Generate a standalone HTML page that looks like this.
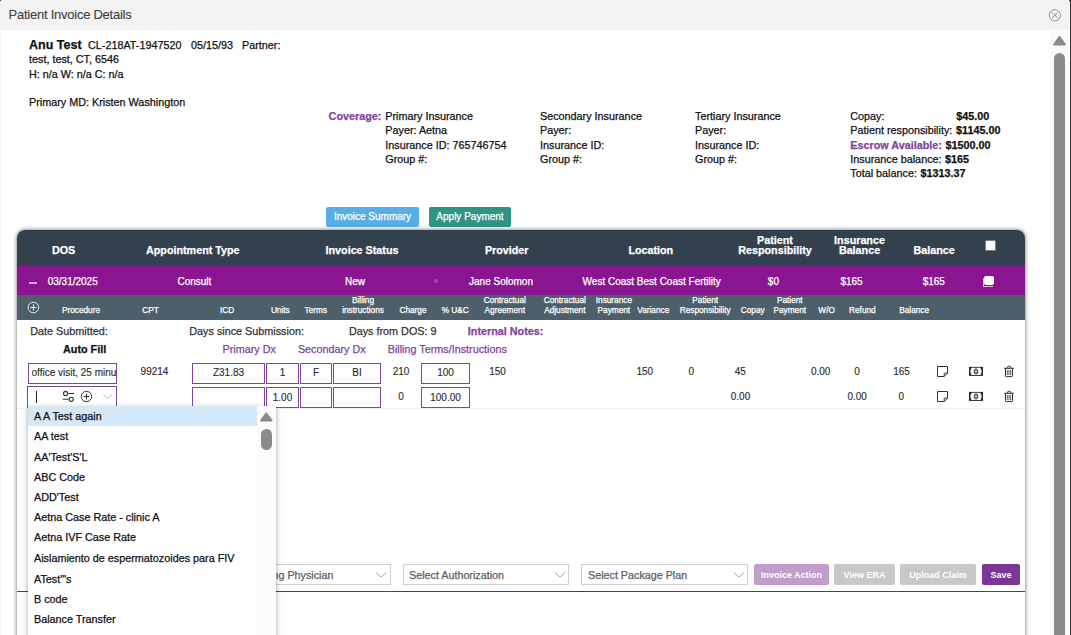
<!DOCTYPE html>
<html><head><meta charset="utf-8"><style>
html,body{margin:0;padding:0;width:1071px;height:635px;overflow:hidden;background:#fff;}
body{position:relative;font-family:"Liberation Sans",sans-serif;}
.t{position:absolute;white-space:nowrap;-webkit-text-stroke:0.25px currentColor;}
.r{position:absolute;}
</style></head><body>
<div class="r" style="left:0px;top:0px;width:1071px;height:635px;background:#333;"></div>
<div class="r" style="left:0px;top:0px;width:1070px;height:635px;background:#fff;border-radius:3px 3px 0 0;"></div>
<div class="r" style="left:0px;top:0px;width:1069px;height:30px;background:#f3f3f3;border-radius:3px 0 0 0;"></div>
<div class="r" style="left:0px;top:30px;width:1px;height:605px;background:#f3f3f3;"></div>
<div class="t" style="left:8.6px;top:8px;font-size:13px;line-height:13px;color:#404040;letter-spacing:-0.25px;-webkit-text-stroke:0.1px currentColor;">Patient Invoice Details</div>
<svg class="r" style="left:1047px;top:8px" width="16" height="16" viewBox="0 0 16 16"><circle cx="7.9" cy="7.3" r="5.6" fill="none" stroke="#777" stroke-width="0.8"/><path d="M4.9 4.3L10.9 10.3M10.9 4.3L4.9 10.3" stroke="#777" stroke-width="0.8"/></svg>
<div class="r" style="left:1050px;top:30px;width:18px;height:605px;background:#fafafa;"></div>
<svg class="r" style="left:1050px;top:30px" width="19" height="20" viewBox="0 0 19 20"><path d="M9.5 6.8 L14.9 14.6 L4.1 14.6 Z" fill="#8a8a8a" stroke="#8a8a8a" stroke-width="1.8" stroke-linejoin="round"/></svg>
<div class="r" style="left:1054px;top:53px;width:11px;height:600px;background:#8a8a8a;border-radius:5.5px;"></div>
<div class="t" style="left:29px;top:39px;font-size:12.5px;line-height:12.5px;color:#111;font-weight:bold;">Anu Test</div>
<div class="t" style="left:88px;top:40px;font-size:10.8px;line-height:10.8px;color:#111;">CL-218AT-1947520</div>
<div class="t" style="left:191px;top:40px;font-size:10.8px;line-height:10.8px;color:#111;">05/15/93</div>
<div class="t" style="left:242px;top:40px;font-size:10.8px;line-height:10.8px;color:#111;">Partner:</div>
<div class="t" style="left:29px;top:54px;font-size:10.8px;line-height:10.8px;color:#111;">test, test, CT, 6546</div>
<div class="t" style="left:29px;top:69px;font-size:10.8px;line-height:10.8px;color:#111;">H: n/a W: n/a C: n/a</div>
<div class="t" style="left:29px;top:97px;font-size:10.8px;line-height:10.8px;color:#111;">Primary MD: Kristen Washington</div>
<div class="t" style="left:328.6px;top:111px;font-size:10.8px;line-height:10.8px;color:#8243a0;font-weight:bold;">Coverage:</div>
<div class="t" style="left:385.3px;top:111px;font-size:10.8px;line-height:10.8px;color:#111;">Primary Insurance</div>
<div class="t" style="left:385.3px;top:125px;font-size:10.8px;line-height:10.8px;color:#111;">Payer: Aetna</div>
<div class="t" style="left:385.3px;top:140px;font-size:10.8px;line-height:10.8px;color:#111;">Insurance ID: 765746754</div>
<div class="t" style="left:385.3px;top:154px;font-size:10.8px;line-height:10.8px;color:#111;">Group #:</div>
<div class="t" style="left:540px;top:111px;font-size:10.8px;line-height:10.8px;color:#111;">Secondary Insurance</div>
<div class="t" style="left:540px;top:125px;font-size:10.8px;line-height:10.8px;color:#111;">Payer:</div>
<div class="t" style="left:540px;top:140px;font-size:10.8px;line-height:10.8px;color:#111;">Insurance ID:</div>
<div class="t" style="left:540px;top:154px;font-size:10.8px;line-height:10.8px;color:#111;">Group #:</div>
<div class="t" style="left:695px;top:111px;font-size:10.8px;line-height:10.8px;color:#111;">Tertiary Insurance</div>
<div class="t" style="left:695px;top:125px;font-size:10.8px;line-height:10.8px;color:#111;">Payer:</div>
<div class="t" style="left:695px;top:140px;font-size:10.8px;line-height:10.8px;color:#111;">Insurance ID:</div>
<div class="t" style="left:695px;top:154px;font-size:10.8px;line-height:10.8px;color:#111;">Group #:</div>
<div class="t" style="left:850.3px;top:111px;font-size:10.8px;line-height:10.8px;color:#111;">Copay:</div>
<div class="t" style="left:956.3px;top:111px;font-size:10.8px;line-height:10.8px;color:#111;font-weight:bold;">$45.00</div>
<div class="t" style="left:850.3px;top:125px;font-size:10.8px;line-height:10.8px;color:#111;">Patient responsibility:</div>
<div class="t" style="left:956px;top:125px;font-size:10.8px;line-height:10.8px;color:#111;font-weight:bold;">$1145.00</div>
<div class="t" style="left:850.3px;top:140px;font-size:10.8px;line-height:10.8px;color:#8243a0;font-weight:bold;">Escrow Available:</div>
<div class="t" style="left:945.6px;top:140px;font-size:10.8px;line-height:10.8px;color:#111;font-weight:bold;">$1500.00</div>
<div class="t" style="left:850.3px;top:154px;font-size:10.8px;line-height:10.8px;color:#111;">Insurance balance:</div>
<div class="t" style="left:945px;top:154px;font-size:10.8px;line-height:10.8px;color:#111;font-weight:bold;">$165</div>
<div class="t" style="left:850.3px;top:168px;font-size:10.8px;line-height:10.8px;color:#111;">Total balance:</div>
<div class="t" style="left:920.6px;top:168px;font-size:10.8px;line-height:10.8px;color:#111;font-weight:bold;">$1313.37</div>
<div class="r" style="left:326px;top:207px;width:93px;height:20px;background:#58aee6;border-radius:2px;"></div>
<div class="t" style="left:252.50px;width:240px;text-align:center;top:212px;font-size:10px;line-height:10px;color:#fff;">Invoice Summary</div>
<div class="r" style="left:429px;top:207px;width:82px;height:20px;background:#2e9585;border-radius:2px;"></div>
<div class="t" style="left:350.00px;width:240px;text-align:center;top:212px;font-size:10px;line-height:10px;color:#fff;">Apply Payment</div>
<div class="r" style="left:17px;top:230px;width:1008px;height:420px;background:#fff;border-radius:8px 8px 0 0;box-shadow:0 0 4px rgba(0,0,0,0.62);"></div>
<div class="r" style="left:17px;top:230px;width:1008px;height:36px;background:#33414e;border-radius:8px 8px 0 0;"></div>
<div class="t" style="left:-56.40px;width:240px;text-align:center;top:245px;font-size:10.75px;line-height:10.75px;color:#fff;font-weight:bold;">DOS</div>
<div class="t" style="left:72.80px;width:240px;text-align:center;top:245px;font-size:10.75px;line-height:10.75px;color:#fff;font-weight:bold;">Appointment Type</div>
<div class="t" style="left:242.00px;width:240px;text-align:center;top:245px;font-size:10.75px;line-height:10.75px;color:#fff;font-weight:bold;">Invoice Status</div>
<div class="t" style="left:386.70px;width:240px;text-align:center;top:245px;font-size:10.75px;line-height:10.75px;color:#fff;font-weight:bold;">Provider</div>
<div class="t" style="left:530.80px;width:240px;text-align:center;top:245px;font-size:10.75px;line-height:10.75px;color:#fff;font-weight:bold;">Location</div>
<div class="t" style="left:655.00px;width:240px;text-align:center;top:235px;font-size:10.75px;line-height:10.75px;color:#fff;font-weight:bold;">Patient</div>
<div class="t" style="left:655.00px;width:240px;text-align:center;top:245px;font-size:10.75px;line-height:10.75px;color:#fff;font-weight:bold;">Responsibility</div>
<div class="t" style="left:739.50px;width:240px;text-align:center;top:235px;font-size:10.75px;line-height:10.75px;color:#fff;font-weight:bold;">Insurance</div>
<div class="t" style="left:739.50px;width:240px;text-align:center;top:245px;font-size:10.75px;line-height:10.75px;color:#fff;font-weight:bold;">Balance</div>
<div class="t" style="left:814.20px;width:240px;text-align:center;top:245px;font-size:10.75px;line-height:10.75px;color:#fff;font-weight:bold;">Balance</div>
<div class="r" style="left:986px;top:241px;width:9px;height:9px;background:#fff;box-shadow:0 0 0 0.6px #aaa;"></div>
<div class="r" style="left:17px;top:266px;width:1008px;height:29px;background:#8a1590;"></div>
<div class="r" style="left:29px;top:282px;width:8px;height:2px;background:#d9a6dd;"></div>
<div class="t" style="left:47.7px;top:277px;font-size:10px;line-height:10px;color:#fff;">03/31/2025</div>
<div class="t" style="left:74.40px;width:240px;text-align:center;top:277px;font-size:10px;line-height:10px;color:#fff;">Consult</div>
<div class="t" style="left:235.00px;width:240px;text-align:center;top:277px;font-size:10px;line-height:10px;color:#fff;">New</div>
<div class="r" style="left:433.5px;top:279px;width:4px;height:4px;border-radius:50%;background:#a04aa6;"></div>
<div class="t" style="left:381.00px;width:240px;text-align:center;top:277px;font-size:10px;line-height:10px;color:#fff;">Jane Solomon</div>
<div class="t" style="left:531.70px;width:240px;text-align:center;top:277px;font-size:10px;line-height:10px;color:#fff;">West Coast Best Coast Fertility</div>
<div class="t" style="left:653.40px;width:240px;text-align:center;top:277px;font-size:10px;line-height:10px;color:#fff;">$0</div>
<div class="t" style="left:731.50px;width:240px;text-align:center;top:277px;font-size:10px;line-height:10px;color:#fff;">$165</div>
<div class="t" style="left:813.80px;width:240px;text-align:center;top:277px;font-size:10px;line-height:10px;color:#fff;">$165</div>
<div class="r" style="left:984px;top:276px;width:9.5px;height:9px;background:#fff;border-radius:2px;"></div>
<div class="r" style="left:983px;top:286.3px;width:9.5px;height:1.2px;background:#e0c4e3;"></div>
<div class="r" style="left:983px;top:278px;width:1px;height:8.5px;background:#d8b8dc;"></div>
<div class="r" style="left:17px;top:295px;width:1008px;height:25px;background:#4c5f6a;"></div>
<svg class="r" style="left:27px;top:301px" width="13" height="13" viewBox="0 0 13 13"><circle cx="6.4" cy="6.5" r="5.3" fill="none" stroke="#fff" stroke-width="0.9"/><path d="M6.4 3.4V9.6M3.3 6.5H9.5" stroke="#fff" stroke-width="0.9"/></svg>
<div class="t" style="left:31.00px;width:100px;text-align:center;top:307px;font-size:8.25px;line-height:8.25px;color:#fff;">Procedure</div>
<div class="t" style="left:100.60px;width:100px;text-align:center;top:307px;font-size:8.25px;line-height:8.25px;color:#fff;">CPT</div>
<div class="t" style="left:177.20px;width:100px;text-align:center;top:307px;font-size:8.25px;line-height:8.25px;color:#fff;">ICD</div>
<div class="t" style="left:230.30px;width:100px;text-align:center;top:307px;font-size:8.25px;line-height:8.25px;color:#fff;">Units</div>
<div class="t" style="left:265.80px;width:100px;text-align:center;top:307px;font-size:8.25px;line-height:8.25px;color:#fff;">Terms</div>
<div class="t" style="left:313.00px;width:100px;text-align:center;top:297px;font-size:8.25px;line-height:8.25px;color:#fff;">Billing</div>
<div class="t" style="left:313.00px;width:100px;text-align:center;top:307px;font-size:8.25px;line-height:8.25px;color:#fff;">instructions</div>
<div class="t" style="left:363.00px;width:100px;text-align:center;top:307px;font-size:8.25px;line-height:8.25px;color:#fff;">Charge</div>
<div class="t" style="left:405.20px;width:100px;text-align:center;top:307px;font-size:8.25px;line-height:8.25px;color:#fff;">% U&amp;C</div>
<div class="t" style="left:454.80px;width:100px;text-align:center;top:297px;font-size:8.25px;line-height:8.25px;color:#fff;">Contractual</div>
<div class="t" style="left:454.80px;width:100px;text-align:center;top:307px;font-size:8.25px;line-height:8.25px;color:#fff;">Agreement</div>
<div class="t" style="left:514.80px;width:100px;text-align:center;top:297px;font-size:8.25px;line-height:8.25px;color:#fff;">Contractual</div>
<div class="t" style="left:514.80px;width:100px;text-align:center;top:307px;font-size:8.25px;line-height:8.25px;color:#fff;">Adjustment</div>
<div class="t" style="left:563.90px;width:100px;text-align:center;top:297px;font-size:8.25px;line-height:8.25px;color:#fff;">Insurance</div>
<div class="t" style="left:563.90px;width:100px;text-align:center;top:307px;font-size:8.25px;line-height:8.25px;color:#fff;">Payment</div>
<div class="t" style="left:603.30px;width:100px;text-align:center;top:307px;font-size:8.25px;line-height:8.25px;color:#fff;">Variance</div>
<div class="t" style="left:655.20px;width:100px;text-align:center;top:297px;font-size:8.25px;line-height:8.25px;color:#fff;">Patient</div>
<div class="t" style="left:655.20px;width:100px;text-align:center;top:307px;font-size:8.25px;line-height:8.25px;color:#fff;">Responsibility</div>
<div class="t" style="left:702.70px;width:100px;text-align:center;top:307px;font-size:8.25px;line-height:8.25px;color:#fff;">Copay</div>
<div class="t" style="left:739.80px;width:100px;text-align:center;top:297px;font-size:8.25px;line-height:8.25px;color:#fff;">Patient</div>
<div class="t" style="left:739.80px;width:100px;text-align:center;top:307px;font-size:8.25px;line-height:8.25px;color:#fff;">Payment</div>
<div class="t" style="left:776.60px;width:100px;text-align:center;top:307px;font-size:8.25px;line-height:8.25px;color:#fff;">W/O</div>
<div class="t" style="left:812.40px;width:100px;text-align:center;top:307px;font-size:8.25px;line-height:8.25px;color:#fff;">Refund</div>
<div class="t" style="left:864.20px;width:100px;text-align:center;top:307px;font-size:8.25px;line-height:8.25px;color:#fff;">Balance</div>
<div class="t" style="left:30.3px;top:326px;font-size:10.8px;line-height:10.8px;color:#333;">Date Submitted:</div>
<div class="t" style="left:189.3px;top:326px;font-size:10.8px;line-height:10.8px;color:#333;">Days since Submission:</div>
<div class="t" style="left:348.9px;top:326px;font-size:10.8px;line-height:10.8px;color:#333;">Days from DOS: 9</div>
<div class="t" style="left:467.8px;top:326px;font-size:10.8px;line-height:10.8px;color:#8243a0;font-weight:bold;">Internal Notes:</div>
<div class="t" style="left:63px;top:344px;font-size:10.8px;line-height:10.8px;color:#111;font-weight:bold;">Auto Fill</div>
<div class="t" style="left:222.5px;top:344px;font-size:10.8px;line-height:10.8px;color:#8243a0;">Primary Dx</div>
<div class="t" style="left:297.9px;top:344px;font-size:10.8px;line-height:10.8px;color:#8243a0;">Secondary Dx</div>
<div class="t" style="left:387.7px;top:344px;font-size:10.8px;line-height:10.8px;color:#8243a0;">Billing Terms/Instructions</div>
<div class="r" style="left:28px;top:363px;width:89px;height:21px;border:1px solid #83439d;box-sizing:border-box;background:#fff;"></div>
<div class="t" style="left:31.5px;top:368px;font-size:10px;line-height:10px;color:#2a2a2a;-webkit-text-stroke:0.12px currentColor;width:84px;overflow:hidden;">office visit, 25 minu</div>
<div class="t" style="left:34.50px;width:240px;text-align:center;top:367px;font-size:10px;line-height:10px;color:#2a2a2a;-webkit-text-stroke:0.12px currentColor;">99214</div>
<div class="r" style="left:192px;top:363px;width:73px;height:21px;border:1px solid #83439d;box-sizing:border-box;background:#fff;"></div>
<div class="t" style="left:108.50px;width:240px;text-align:center;top:368px;font-size:10px;line-height:10px;color:#2a2a2a;-webkit-text-stroke:0.12px currentColor;">Z31.83</div>
<div class="r" style="left:266px;top:363px;width:33px;height:21px;border:1px solid #83439d;box-sizing:border-box;background:#fff;"></div>
<div class="t" style="left:162.50px;width:240px;text-align:center;top:368px;font-size:10px;line-height:10px;color:#2a2a2a;-webkit-text-stroke:0.12px currentColor;">1</div>
<div class="r" style="left:300px;top:363px;width:32px;height:21px;border:1px solid #83439d;box-sizing:border-box;background:#fff;"></div>
<div class="t" style="left:196.00px;width:240px;text-align:center;top:368px;font-size:10px;line-height:10px;color:#2a2a2a;-webkit-text-stroke:0.12px currentColor;">F</div>
<div class="r" style="left:333px;top:363px;width:48px;height:21px;border:1px solid #83439d;box-sizing:border-box;background:#fff;"></div>
<div class="t" style="left:237.00px;width:240px;text-align:center;top:368px;font-size:10px;line-height:10px;color:#2a2a2a;-webkit-text-stroke:0.12px currentColor;">BI</div>
<div class="t" style="left:281.00px;width:240px;text-align:center;top:367px;font-size:10px;line-height:10px;color:#2a2a2a;-webkit-text-stroke:0.12px currentColor;">210</div>
<div class="r" style="left:421px;top:363px;width:49px;height:21px;border:1px solid #83439d;box-sizing:border-box;background:#fff;"></div>
<div class="t" style="left:325.50px;width:240px;text-align:center;top:368px;font-size:10px;line-height:10px;color:#2a2a2a;-webkit-text-stroke:0.12px currentColor;">100</div>
<div class="t" style="left:377.50px;width:240px;text-align:center;top:367px;font-size:10px;line-height:10px;color:#2a2a2a;-webkit-text-stroke:0.12px currentColor;">150</div>
<div class="t" style="left:524.80px;width:240px;text-align:center;top:367px;font-size:10px;line-height:10px;color:#2a2a2a;-webkit-text-stroke:0.12px currentColor;">150</div>
<div class="t" style="left:571.20px;width:240px;text-align:center;top:367px;font-size:10px;line-height:10px;color:#2a2a2a;-webkit-text-stroke:0.12px currentColor;">0</div>
<div class="t" style="left:620.20px;width:240px;text-align:center;top:367px;font-size:10px;line-height:10px;color:#2a2a2a;-webkit-text-stroke:0.12px currentColor;">45</div>
<div class="t" style="left:700.70px;width:240px;text-align:center;top:367px;font-size:10px;line-height:10px;color:#2a2a2a;-webkit-text-stroke:0.12px currentColor;">0.00</div>
<div class="t" style="left:737.00px;width:240px;text-align:center;top:367px;font-size:10px;line-height:10px;color:#2a2a2a;-webkit-text-stroke:0.12px currentColor;">0</div>
<div class="t" style="left:781.50px;width:240px;text-align:center;top:367px;font-size:10px;line-height:10px;color:#2a2a2a;-webkit-text-stroke:0.12px currentColor;">165</div>
<div class="r" style="left:27px;top:386px;width:90px;height:22px;border:1px solid #83439d;box-sizing:border-box;background:#fff;"></div>
<div class="r" style="left:36px;top:391px;width:1px;height:12px;background:#222;"></div>
<div class="r" style="left:192px;top:387px;width:73px;height:21px;border:1px solid #83439d;box-sizing:border-box;background:#fff;"></div>
<div class="r" style="left:266px;top:387px;width:33px;height:21px;border:1px solid #83439d;box-sizing:border-box;background:#fff;"></div>
<div class="t" style="left:162.50px;width:240px;text-align:center;top:393px;font-size:10px;line-height:10px;color:#2a2a2a;-webkit-text-stroke:0.12px currentColor;">1.00</div>
<div class="r" style="left:300px;top:387px;width:32px;height:21px;border:1px solid #83439d;box-sizing:border-box;background:#fff;"></div>
<div class="r" style="left:333px;top:387px;width:48px;height:21px;border:1px solid #83439d;box-sizing:border-box;background:#fff;"></div>
<div class="t" style="left:281.00px;width:240px;text-align:center;top:392px;font-size:10px;line-height:10px;color:#2a2a2a;-webkit-text-stroke:0.12px currentColor;">0</div>
<div class="r" style="left:421px;top:387px;width:49px;height:21px;border:1px solid #83439d;box-sizing:border-box;background:#fff;"></div>
<div class="t" style="left:325.50px;width:240px;text-align:center;top:393px;font-size:10px;line-height:10px;color:#2a2a2a;-webkit-text-stroke:0.12px currentColor;">100.00</div>
<div class="t" style="left:620.50px;width:240px;text-align:center;top:392px;font-size:10px;line-height:10px;color:#2a2a2a;-webkit-text-stroke:0.12px currentColor;">0.00</div>
<div class="t" style="left:737.20px;width:240px;text-align:center;top:392px;font-size:10px;line-height:10px;color:#2a2a2a;-webkit-text-stroke:0.12px currentColor;">0.00</div>
<div class="t" style="left:781.20px;width:240px;text-align:center;top:392px;font-size:10px;line-height:10px;color:#2a2a2a;-webkit-text-stroke:0.12px currentColor;">0</div>
<div class="r" style="left:17px;top:408px;width:1008px;height:1px;background:#ededed;"></div>
<svg class="r" style="left:60px;top:389px" width="56" height="16" viewBox="0 0 56 16"><path d="M8.5 4.5H14M2.8 10.3H8.5" stroke="#333" stroke-width="1.1" fill="none"/><circle cx="5.6" cy="4.5" r="2.1" fill="none" stroke="#333" stroke-width="1.1"/><circle cx="11.2" cy="10.3" r="2.1" fill="none" stroke="#333" stroke-width="1.1"/><circle cx="26.5" cy="7.5" r="5.2" fill="none" stroke="#333" stroke-width="1"/><path d="M26.5 4.7V10.3M23.7 7.5H29.3" stroke="#333" stroke-width="1"/><path d="M43.3 5.5L47.6 9.6L51.9 5.5" stroke="#b5b5b5" stroke-width="1" fill="none"/></svg>
<svg class="r" style="left:936px;top:365px" width="80" height="13" viewBox="0 0 80 13"><path d="M1.5 1.5H11.5V8.2L8.2 11.5H1.5Z" fill="none" stroke="#333" stroke-width="1"/><path d="M8.2 11.5V8.7Q8.2 8.2 8.7 8.2H11.5" fill="none" stroke="#333" stroke-width="1"/><rect x="33" y="1.9" width="14" height="9" fill="#262626"/><path d="M35.8 2.8H44.2C46 4.1 46 8.8 44.2 10.1H35.8C34 8.8 34 4.1 35.8 2.8Z" fill="#fff"/><ellipse cx="40" cy="6.45" rx="1.8" ry="2.6" fill="none" stroke="#262626" stroke-width="1"/><path d="M40 4.6V8.3" stroke="#262626" stroke-width="0.8"/><path d="M71.6 3V2.1Q71.6 1.3 72.4 1.3H73.8Q74.6 1.3 74.6 2.1V3" fill="none" stroke="#333" stroke-width="1"/><path d="M68.2 3.3H77.8" stroke="#333" stroke-width="1.1"/><path d="M69.5 3.6V10.9Q69.5 11.6 70.2 11.6H75.8Q76.5 11.6 76.5 10.9V3.6" fill="none" stroke="#333" stroke-width="1"/><path d="M71.3 5V10M73 5V10M74.7 5V10" stroke="#333" stroke-width="0.8"/></svg>
<svg class="r" style="left:936px;top:390px" width="80" height="13" viewBox="0 0 80 13"><path d="M1.5 1.5H11.5V8.2L8.2 11.5H1.5Z" fill="none" stroke="#333" stroke-width="1"/><path d="M8.2 11.5V8.7Q8.2 8.2 8.7 8.2H11.5" fill="none" stroke="#333" stroke-width="1"/><rect x="33" y="1.9" width="14" height="9" fill="#262626"/><path d="M35.8 2.8H44.2C46 4.1 46 8.8 44.2 10.1H35.8C34 8.8 34 4.1 35.8 2.8Z" fill="#fff"/><ellipse cx="40" cy="6.45" rx="1.8" ry="2.6" fill="none" stroke="#262626" stroke-width="1"/><path d="M40 4.6V8.3" stroke="#262626" stroke-width="0.8"/><path d="M71.6 3V2.1Q71.6 1.3 72.4 1.3H73.8Q74.6 1.3 74.6 2.1V3" fill="none" stroke="#333" stroke-width="1"/><path d="M68.2 3.3H77.8" stroke="#333" stroke-width="1.1"/><path d="M69.5 3.6V10.9Q69.5 11.6 70.2 11.6H75.8Q76.5 11.6 76.5 10.9V3.6" fill="none" stroke="#333" stroke-width="1"/><path d="M71.3 5V10M73 5V10M74.7 5V10" stroke="#333" stroke-width="0.8"/></svg>
<div class="r" style="left:196px;top:564px;width:195px;height:21px;border:1px solid #cfcfcf;box-sizing:border-box;background:#fff;"></div>
<div class="t" style="left:202px;top:570px;font-size:10.75px;line-height:10.75px;color:#606060;">Select Rendering Physician</div>
<div class="r" style="left:403px;top:564px;width:166px;height:21px;border:1px solid #cfcfcf;box-sizing:border-box;background:#fff;"></div>
<div class="t" style="left:409px;top:570px;font-size:10.75px;line-height:10.75px;color:#606060;">Select Authorization</div>
<div class="r" style="left:581px;top:564px;width:167px;height:21px;border:1px solid #cfcfcf;box-sizing:border-box;background:#fff;"></div>
<div class="t" style="left:588px;top:570px;font-size:10.75px;line-height:10.75px;color:#606060;">Select Package Plan</div>
<svg class="r" style="left:375px;top:571px" width="12" height="8" viewBox="0 0 12 8"><path d="M1 1.5L6 6L11 1.5" stroke="#999" stroke-width="0.9" fill="none"/></svg>
<svg class="r" style="left:554px;top:571px" width="12" height="8" viewBox="0 0 12 8"><path d="M1 1.5L6 6L11 1.5" stroke="#999" stroke-width="0.9" fill="none"/></svg>
<svg class="r" style="left:733px;top:571px" width="12" height="8" viewBox="0 0 12 8"><path d="M1 1.5L6 6L11 1.5" stroke="#999" stroke-width="0.9" fill="none"/></svg>
<div class="r" style="left:754px;top:564px;width:75px;height:21px;background:#c09dca;border-radius:2px;"></div>
<div class="t" style="left:671.50px;width:240px;text-align:center;top:571px;font-size:9px;line-height:9px;color:#fff;font-weight:bold;-webkit-text-stroke:0;">Invoice Action</div>
<div class="r" style="left:834px;top:564px;width:61px;height:21px;background:#c8c8c8;border-radius:2px;"></div>
<div class="t" style="left:744.50px;width:240px;text-align:center;top:571px;font-size:9px;line-height:9px;color:#fff;font-weight:bold;-webkit-text-stroke:0;">View ERA</div>
<div class="r" style="left:900px;top:564px;width:76px;height:21px;background:#c8c8c8;border-radius:2px;"></div>
<div class="t" style="left:818.00px;width:240px;text-align:center;top:571px;font-size:9px;line-height:9px;color:#fff;font-weight:bold;-webkit-text-stroke:0;">Upload Claim</div>
<div class="r" style="left:982px;top:564px;width:38px;height:21px;background:#7c3594;border-radius:2px;"></div>
<div class="t" style="left:881.00px;width:240px;text-align:center;top:571px;font-size:9px;line-height:9px;color:#fff;font-weight:bold;-webkit-text-stroke:0;">Save</div>
<div class="r" style="left:17px;top:591px;width:1008px;height:1px;background:#8b1591;"></div>
<div class="r" style="left:28px;top:406px;width:248px;height:240px;background:#fff;box-shadow:0 2px 5px rgba(0,0,0,0.38);"></div>
<div class="r" style="left:28px;top:406px;width:229px;height:20px;background:#d6e7f5;"></div>
<div class="r" style="left:257px;top:406px;width:19px;height:240px;background:#fbfbfb;"></div>
<svg class="r" style="left:257px;top:406px" width="20" height="20" viewBox="0 0 20 20"><path d="M9.3 7.2 L14.6 14.6 L4 14.6 Z" fill="#8a8a8a" stroke="#8a8a8a" stroke-width="1.8" stroke-linejoin="round"/></svg>
<div class="r" style="left:261px;top:429px;width:11px;height:21px;background:#8a8a8a;border-radius:5.5px;"></div>
<div class="t" style="left:34px;top:411px;font-size:10.8px;line-height:10.8px;color:#111;">A A Test again</div>
<div class="t" style="left:34px;top:431px;font-size:10.8px;line-height:10.8px;color:#111;">AA test</div>
<div class="t" style="left:34px;top:452px;font-size:10.8px;line-height:10.8px;color:#111;">AA'Test'S'L</div>
<div class="t" style="left:34px;top:472px;font-size:10.8px;line-height:10.8px;color:#111;">ABC Code</div>
<div class="t" style="left:34px;top:492px;font-size:10.8px;line-height:10.8px;color:#111;">ADD'Test</div>
<div class="t" style="left:34px;top:512px;font-size:10.8px;line-height:10.8px;color:#111;">Aetna Case Rate - clinic A</div>
<div class="t" style="left:34px;top:532px;font-size:10.8px;line-height:10.8px;color:#111;">Aetna IVF Case Rate</div>
<div class="t" style="left:34px;top:553px;font-size:10.8px;line-height:10.8px;color:#111;">Aislamiento de espermatozoides para FIV</div>
<div class="t" style="left:34px;top:574px;font-size:10.8px;line-height:10.8px;color:#111;">ATest'"s</div>
<div class="t" style="left:34px;top:594px;font-size:10.8px;line-height:10.8px;color:#111;">B code</div>
<div class="t" style="left:34px;top:614px;font-size:10.8px;line-height:10.8px;color:#111;">Balance Transfer</div>
</body></html>
